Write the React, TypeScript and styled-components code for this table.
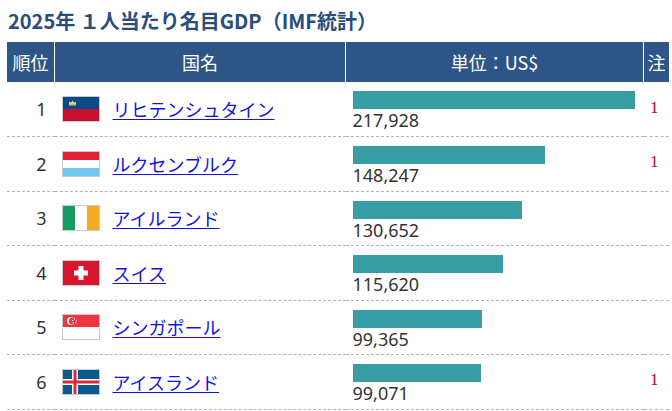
import styled, { createGlobalStyle } from 'styled-components';

const GlobalStyle = createGlobalStyle`
  body {
    margin: 0;
    background: #fff;
    font-family: "Noto Sans", "Noto Sans CJK JP", sans-serif;
    color: #333;
  }
`;

const Page = styled.div`
  padding: 7px 6px 0 7px;
`;

const Title = styled.h2`
  margin: 0 0 7px 1px;
  font-size: 20px;
  line-height: 28px;
  font-weight: 700;
  color: #2a4d7c;
  font-family: "Noto Sans CJK JP", sans-serif;
`;

const Table = styled.table`
  width: 659px;
  border-collapse: collapse;
  table-layout: fixed;
`;

const HeadCell = styled.th<{ $width: number }>`
  width: ${p => p.$width}px;
  height: 40px;
  padding: 0;
  background: #2d5587;
  color: #fff;
  font-weight: 400;
  font-size: 18px;
  font-family: "Noto Sans CJK JP", sans-serif;
  text-align: center;
  border-left: 1px solid #fff;

  &:first-child {
    border-left: none;
  }
`;

const Row = styled.tr`
  height: 54.5px;
  border-bottom: 1px dashed #b4b4b4;
`;

const RankCell = styled.td`
  padding: 0 8px 0 0;
  text-align: right;
  font-size: 18px;
  vertical-align: middle;
`;

const CountryCell = styled.td`
  padding: 0 0 0 7px;
  vertical-align: middle;
`;

const CountryWrap = styled.div`
  display: flex;
  align-items: center;
  gap: 13px;
`;

const FlagBox = styled.span`
  display: block;
  width: 36px;
  height: 24px;
  border: 1px solid #c8c8c8;
  line-height: 0;

  svg {
    display: block;
  }
`;

const CountryLink = styled.a`
  font-size: 18px;
  font-family: "Noto Sans CJK JP", sans-serif;
  color: #1010e8;
  text-decoration: underline;
  text-underline-offset: 2px;
`;

const ValueCell = styled.td`
  padding: 9px 0 0 7px;
  vertical-align: top;
`;

const Bar = styled.div`
  height: 18px;
  background: #389ea6;
`;

const Value = styled.div`
  font-size: 18px;
  line-height: 23px;
  color: #333;
`;

const NoteCell = styled.td`
  text-align: center;
  vertical-align: middle;
  font-family: "Liberation Serif", serif;
  font-size: 17px;
  color: #c8003e;
  padding: 0 4px 3px 0;
`;

const Liechtenstein = () => (
  <svg width="36" height="24" viewBox="0 0 36 24">
    <rect width="36" height="12" fill="#0b4a86" />
    <rect y="12" width="36" height="12" fill="#c8102e" />
    <path d="M6 7 L6 4.5 L8 5.5 L9.5 3.5 L11 5.5 L13 4.5 L13 7 Z" fill="#e6d36a" />
    <rect x="6" y="7" width="7" height="1.5" fill="#d8c050" />
  </svg>
);

const Luxembourg = () => (
  <svg width="36" height="24" viewBox="0 0 36 24">
    <rect width="36" height="8" fill="#e0213a" />
    <rect y="8" width="36" height="8" fill="#fff" />
    <rect y="16" width="36" height="8" fill="#72c9ee" />
  </svg>
);

const Ireland = () => (
  <svg width="36" height="24" viewBox="0 0 36 24">
    <rect width="12" height="24" fill="#169b62" />
    <rect x="12" width="12" height="24" fill="#fff" />
    <rect x="24" width="12" height="24" fill="#f7a825" />
  </svg>
);

const Switzerland = () => (
  <svg width="36" height="24" viewBox="0 0 36 24">
    <rect width="36" height="24" fill="#d8142e" />
    <rect x="15.5" y="5" width="5" height="14" fill="#fff" />
    <rect x="11" y="9.5" width="14" height="5" fill="#fff" />
  </svg>
);

const Singapore = () => (
  <svg width="36" height="24" viewBox="0 0 36 24">
    <rect width="36" height="12" fill="#ef3340" />
    <rect y="12" width="36" height="12" fill="#fff" />
    <circle cx="8" cy="6" r="4" fill="#fff" />
    <circle cx="9.5" cy="6" r="3.6" fill="#ef3340" />
    <circle cx="11.5" cy="4" r="0.7" fill="#fff" />
    <circle cx="13.5" cy="5.5" r="0.7" fill="#fff" />
    <circle cx="12.8" cy="7.8" r="0.7" fill="#fff" />
    <circle cx="10.2" cy="7.8" r="0.7" fill="#fff" />
    <circle cx="9.6" cy="5.5" r="0.7" fill="#fff" />
  </svg>
);

const Iceland = () => (
  <svg width="36" height="24" viewBox="0 0 36 24">
    <rect width="36" height="24" fill="#0a5a90" />
    <rect x="9" width="6" height="24" fill="#fff" />
    <rect y="9" width="36" height="6" fill="#fff" />
    <rect x="10.5" width="3" height="24" fill="#d72a3c" />
    <rect y="10.5" width="36" height="3" fill="#d72a3c" />
  </svg>
);

type Entry = {
  rank: number;
  name: string;
  value: number;
  note?: string;
  Flag: () => JSX.Element;
};

const entries: Entry[] = [
  { rank: 1, name: 'リヒテンシュタイン', value: 217928, note: '1', Flag: Liechtenstein },
  { rank: 2, name: 'ルクセンブルク', value: 148247, note: '1', Flag: Luxembourg },
  { rank: 3, name: 'アイルランド', value: 130652, Flag: Ireland },
  { rank: 4, name: 'スイス', value: 115620, Flag: Switzerland },
  { rank: 5, name: 'シンガポール', value: 99365, Flag: Singapore },
  { rank: 6, name: 'アイスランド', value: 99071, note: '1', Flag: Iceland },
];

const maxValue = Math.max(...entries.map(e => e.value));
const BAR_MAX = 282;

export default function App() {
  return (
    <Page>
      <GlobalStyle />
      <Title>2025年 １人当たり名目GDP（IMF統計）</Title>
      <Table>
        <thead>
          <tr>
            <HeadCell $width={47}>順位</HeadCell>
            <HeadCell $width={290}>国名</HeadCell>
            <HeadCell $width={297}>単位：US$</HeadCell>
            <HeadCell $width={25}>注</HeadCell>
          </tr>
        </thead>
        <tbody>
          {entries.map(({ rank, name, value, note, Flag }) => (
            <Row key={rank}>
              <RankCell>{rank}</RankCell>
              <CountryCell>
                <CountryWrap>
                  <FlagBox>
                    <Flag />
                  </FlagBox>
                  <CountryLink href="#">{name}</CountryLink>
                </CountryWrap>
              </CountryCell>
              <ValueCell>
                <Bar style={{ width: `${Math.round((value / maxValue) * BAR_MAX)}px` }} />
                <Value>{value.toLocaleString('en-US')}</Value>
              </ValueCell>
              <NoteCell>{note}</NoteCell>
            </Row>
          ))}
        </tbody>
      </Table>
    </Page>
  );
}
